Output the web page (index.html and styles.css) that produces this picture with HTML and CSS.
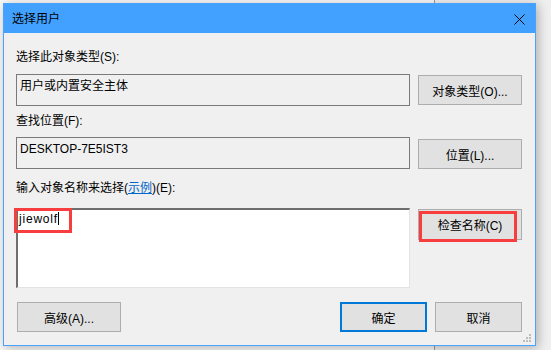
FILE: index.html
```html
<!DOCTYPE html>
<html lang="zh-CN">
<head>
  <meta charset="UTF-8" />
  <title>选择用户</title>
  <link rel="stylesheet" href="styles.css">
</head>
<body>
  <div class="window">
    <div class="titlebar">
      <span class="title">选择用户</span>
      <svg class="close" width="11" height="11" viewBox="0 0 11 11">
        <path d="M0.5 0.5 L10.5 10.5 M10.5 0.5 L0.5 10.5" stroke="#000" stroke-width="1" fill="none"/>
      </svg>
    </div>

    <div class="content">
      <div class="label first">选择此对象类型(S):</div>
      <div class="row">
        <div class="field">用户或内置安全主体</div>
        <button class="btn side">对象类型(O)...</button>
      </div>

      <div class="label second">查找位置(F):</div>
      <div class="row row-two">
        <div class="field">DESKTOP-7E5IST3</div>
        <button class="btn side">位置(L)...</button>
      </div>

      <div class="label third">输入对象名称来选择(<a class="link" href="#">示例</a>)(E):</div>
      <div class="row row-three">
        <div class="names">
          <span class="typed">jiewolf</span><span class="caret"></span>
          <div class="mark mark-input"></div>
        </div>
        <button class="btn side check">
          检查名称(C)
          <span class="mark mark-button"></span>
        </button>
      </div>

      <div class="footer">
        <button class="btn advanced">高级(A)...</button>
        <div class="footer-right">
          <button class="btn ok">确定</button>
          <button class="btn cancel">取消</button>
        </div>
      </div>
    </div>

    <svg class="grip" width="9" height="9" viewBox="0 0 9 9">
      <rect x="6" y="0" width="2" height="2" fill="#bdbdbd"/>
      <rect x="3" y="3" width="2" height="2" fill="#bdbdbd"/>
      <rect x="6" y="3" width="2" height="2" fill="#bdbdbd"/>
      <rect x="0" y="6" width="2" height="2" fill="#bdbdbd"/>
      <rect x="3" y="6" width="2" height="2" fill="#bdbdbd"/>
      <rect x="6" y="6" width="2" height="2" fill="#bdbdbd"/>
    </svg>
  </div>
</body>
</html>
```

FILE: styles.css
```css
body {
  margin: 0;
  height: 350px;
  overflow: hidden;
  font-family: "Liberation Sans", "Noto Sans CJK SC", sans-serif;
  font-size: 12px;
  color: #000;
  background: linear-gradient(to right, #f8f8f8 434px, #9a9a9a 434px, #9a9a9a 435px, #efefef 435px);
}

.window {
  position: relative;
  box-sizing: border-box;
  margin: 3px 0 0 3px;
  width: 533px;
  height: 343px;
  background: #f0f0f0;
  border: 1px solid #4aa2ff;
  box-shadow: 2px 2px 10px rgba(0, 0, 0, 0.28);
}

.titlebar {
  height: 29px;
  background: #42a0ff;
  display: flex;
  align-items: center;
  justify-content: space-between;
  padding: 0 10px 0 8px;
}

.title {
  line-height: 16px;
}

.close {
  display: block;
  margin-top: 1px;
}

.content {
  padding: 16px 13px 0 12px;
}

.label {
  height: 16px;
  line-height: 16px;
  white-space: nowrap;
}

.label.second {
  margin-top: 7px;
}

.label.third {
  margin-top: 11px;
}

.link {
  color: #0066cc;
  text-decoration: underline;
}

.row {
  display: flex;
  gap: 8px;
  margin-top: 9px;
}

.row-two {
  margin-top: 8px;
}

.row-three {
  margin-top: 12px;
}

.field {
  box-sizing: border-box;
  width: 394px;
  height: 32px;
  border: 1px solid #7a7a7a;
  padding: 3px 3px 0;
  line-height: 16px;
}

.btn {
  box-sizing: border-box;
  height: 30px;
  padding: 0;
  background: #e1e1e1;
  border: 1px solid #adadad;
  font-family: inherit;
  font-size: 12px;
  color: #000;
}

.btn.side {
  width: 104px;
  margin-top: 1px;
}

.row-two .btn.side {
  margin-top: 2px;
}

.names {
  position: relative;
  box-sizing: border-box;
  width: 394px;
  height: 80px;
  background: #fff;
  border-top: 2px solid #6e6e6e;
  border-left: 2px solid #6e6e6e;
  border-right: 1px solid #e3e3e3;
  border-bottom: 1px solid #e3e3e3;
  padding: 1px 0 0 1px;
  line-height: 16px;
}

.typed {
  letter-spacing: 0.8px;
}

.caret {
  display: inline-block;
  width: 1px;
  height: 13px;
  background: #000;
  vertical-align: -2px;
}

.check {
  position: relative;
  height: 31px;
}

.mark {
  position: absolute;
  box-sizing: border-box;
  border: 3px solid #f73d3d;
}

.mark-input {
  left: -4px;
  top: -2px;
  width: 58px;
  height: 25px;
}

.mark-button {
  left: 0;
  top: 1px;
  width: 98px;
  height: 31px;
}

.footer {
  display: flex;
  justify-content: space-between;
  margin-top: 14px;
}

.advanced {
  width: 104px;
  margin-left: 1px;
}

.footer-right {
  display: flex;
  gap: 8px;
}

.ok {
  width: 87px;
  border: 2px solid #0078d7;
}

.cancel {
  width: 87px;
}

.grip {
  position: absolute;
  right: 3px;
  bottom: 2px;
}
```
